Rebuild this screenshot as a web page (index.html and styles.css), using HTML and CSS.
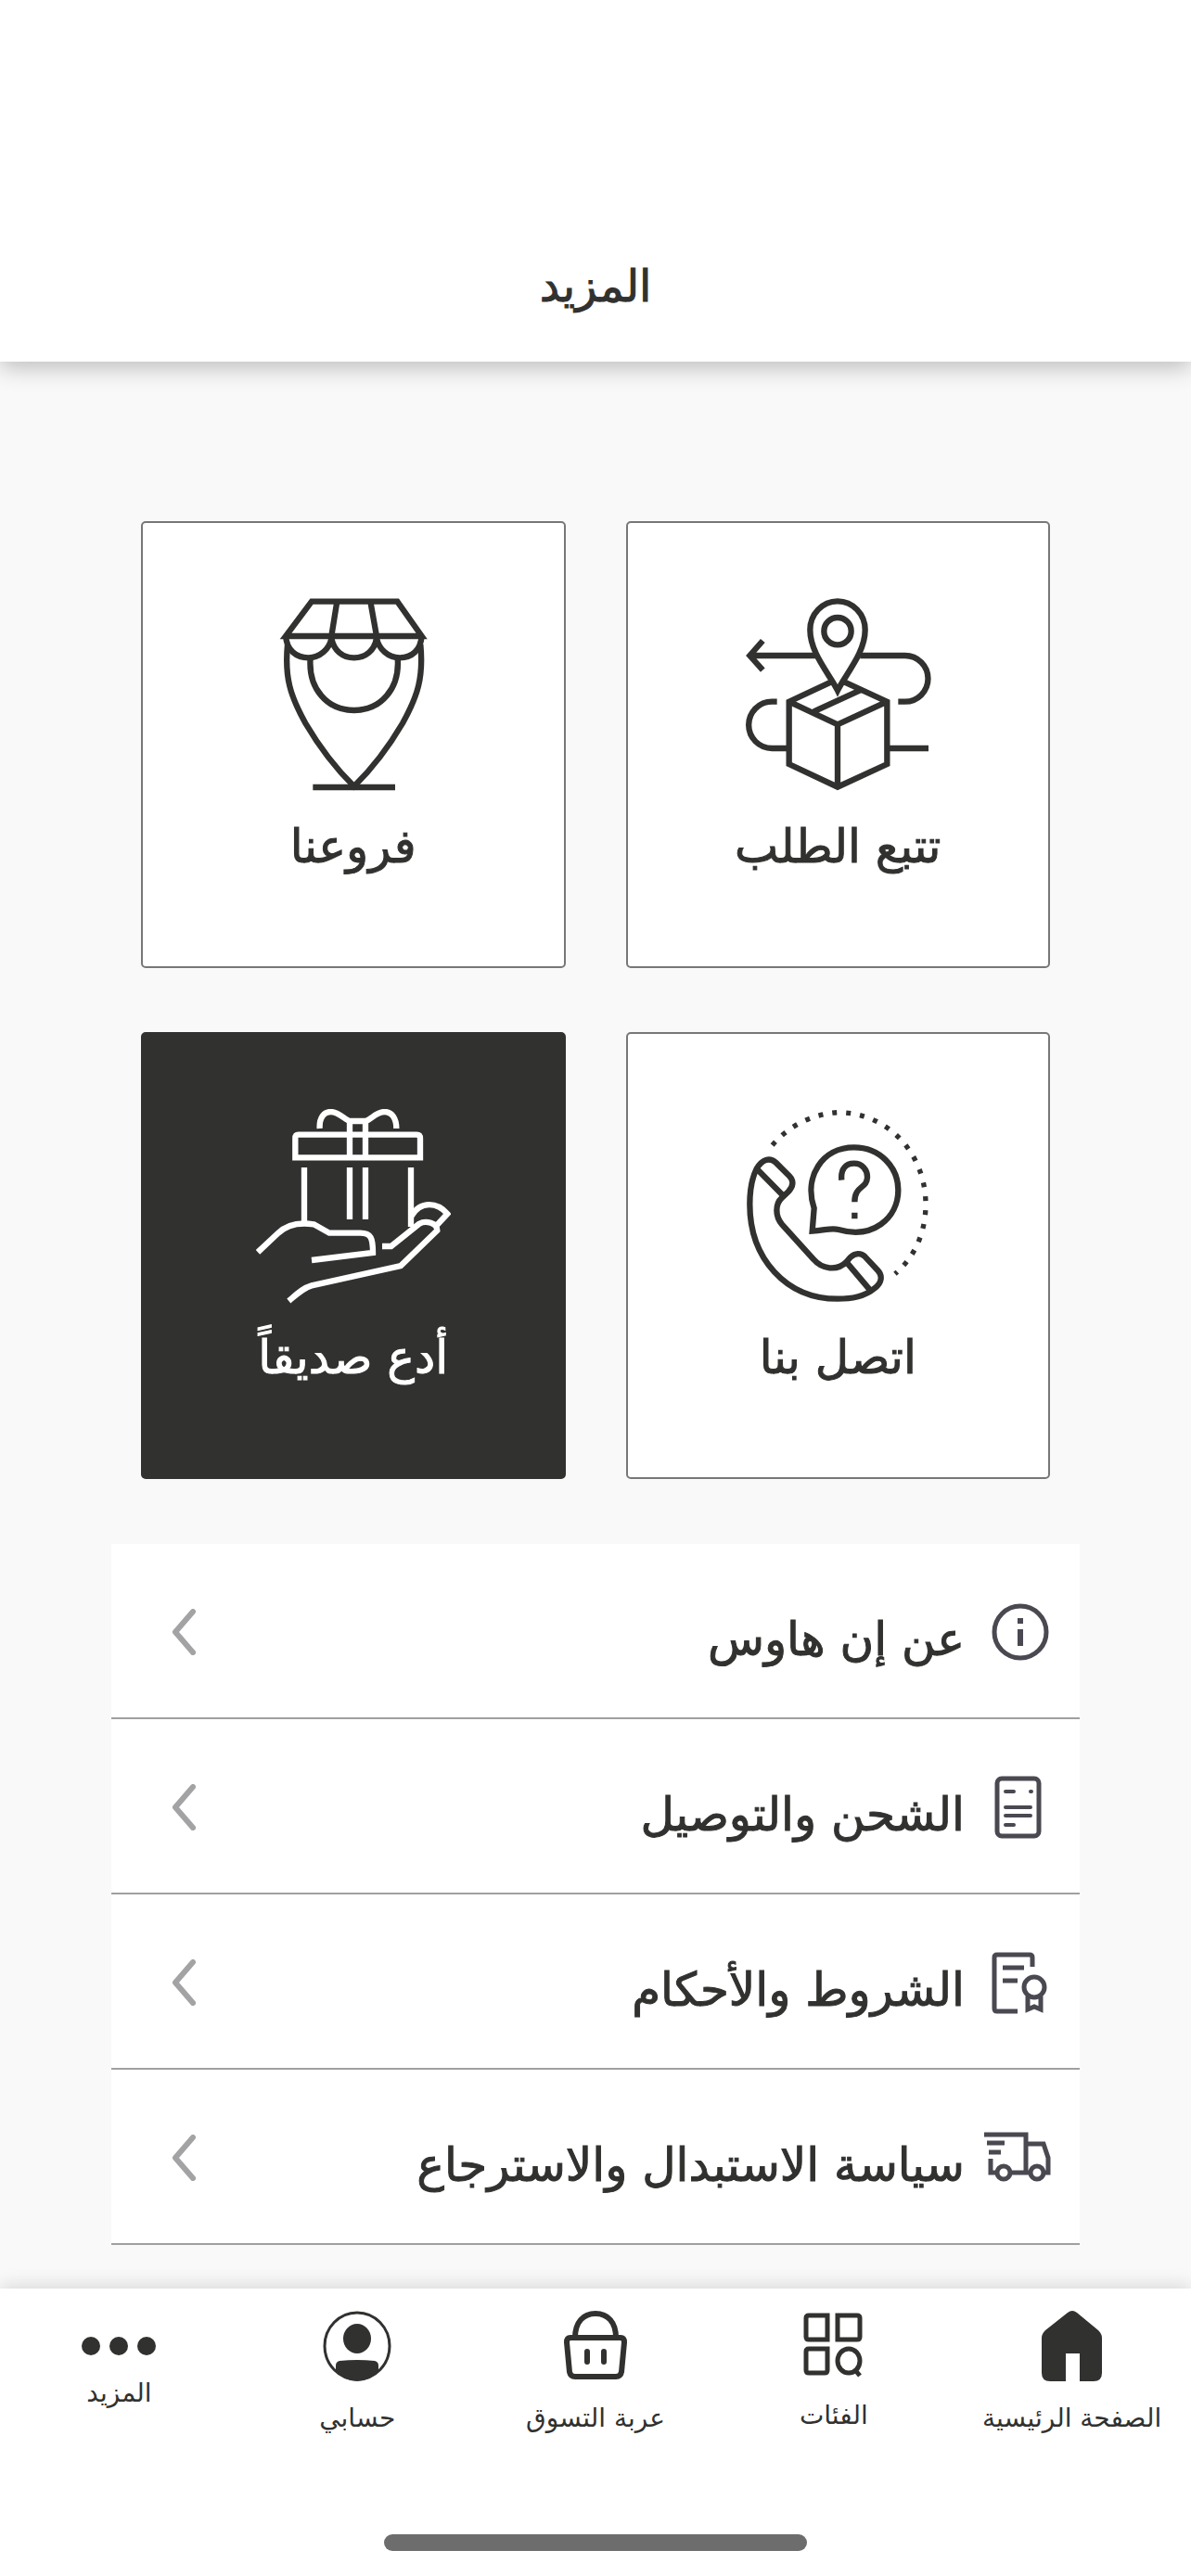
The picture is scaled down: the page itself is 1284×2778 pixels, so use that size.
FILE: index.html
```html
<!DOCTYPE html>
<html lang="ar" dir="rtl">
<head>
    <meta charset="UTF-8">
    <meta name="viewport" content="width=device-width, initial-scale=1.0">
    <title>المزيد</title>
    <link rel="stylesheet" href="styles.css">
</head>
<body>
    <header class="header">
        <h1>المزيد</h1>
    </header>

    <main class="content">
        <!-- البطاقات -->
        <div class="cards">
            <a href="#" class="card">
                <svg class="card-icon" viewBox="87 75 630 630">
                    <path d="M330 261H116M160 213L118 261L160 308M475 261H620A74 74 0 0 1 620 410H598M206 410H190A74 74 0 0 0 190 561H240M565 561H696"/>
                    <path d="M380 347L245 410V612L402 686L562 612V410L425 347M245 410L402 484L562 410M402 484V686M325 442L475 373"/>
                    <path d="M402 374C375 320 313 252 313 178A89 93 0 0 1 491 178C491 252 429 320 402 374Z"/>
                    <circle cx="402" cy="182" r="44"/>
                </svg>
                <span>تتبع الطلب</span>
            </a>
            <a href="#" class="card">
                <svg class="card-icon" viewBox="-12 75 630 630">
                    <path d="M168 86H445L524 198H84ZM250 86L232 198V225M358 86L378 198V225"/>
                    <path d="M84 198C88 244 118 268 157 268C195 268 225 240 232 205C240 245 268 268 305 268C342 268 371 245 378 205C386 240 414 268 453 268C492 268 520 244 524 198"/>
                    <path d="M90 225C80 330 98 390 148 480C195 560 245 625 305 684C365 625 415 560 462 480C512 390 530 330 520 225"/>
                    <path d="M164 268C156 370 220 438 305 438C390 438 454 370 446 268M172 687H438"/>
                </svg>
                <span>فروعنا</span>
            </a>
            <a href="#" class="card">
                <svg class="card-icon" viewBox="87 77 630 630">
                    <path class="dots" d="M191 194A300 300 0 0 1 402 88C568 88 687 224 687 385C687 479 650 557 588 610"/>
                    <path d="M140 270C158 240 182 232 202 250L246 294C262 310 258 328 243 344L222 364C199 385 200 424 222 450L325 564C351 595 401 602 430 572L443 557C458 543 477 541 491 555L532 599C548 616 545 638 524 655C488 686 445 691 402 691C235 691 118 560 118 385C118 335 124 302 140 270Z"/>
                    <path d="M140 270L227 358M432 574L508 664"/>
                    <path d="M320 472L326 398C292 296 352 201 455 201C540 201 598 266 598 339C598 431 515 499 405 467C382 460 360 470 320 472Z"/>
                    <path d="M415 307C411 269 430 253 455 253C482 253 498 274 498 296C498 337 457 322 457 378M457 412V432"/>
                </svg>
                <span>اتصل بنا</span>
            </a>
            <a href="#" class="card card-dark">
                <svg class="card-icon" viewBox="78 77 630 630">
                    <path d="M284 140C282 105 298 86 320 86C348 86 368 116 384 116H432C452 110 466 86 494 86C518 86 532 108 532 140"/>
                    <path d="M215 160H598Q609 160 609 172V234H205V172Q205 160 215 160ZM381 116V234M432 116V234M381 266V434M432 266V434M234 266V450M579 266V458"/>
                    <path d="M84 540L148 480C182 446 225 444 265 450L315 478H415C450 478 456 495 456 542L258 566"/>
                    <path d="M184 698C210 676 230 656 258 648L546 584L664 470C664 446 628 436 606 448L515 521H486M580 424C610 372 665 378 697 416L662 454"/>
                </svg>
                <span>أدع صديقاً</span>
            </a>
        </div>

        <!-- قائمة الصفحات -->
        <ul class="menu">
            <li>
                <a href="#">
                    <svg class="menu-icon" viewBox="0 0 72 72">
                        <circle cx="39" cy="36" r="28"/>
                        <path d="M39 21V27M39 33V51" stroke-width="6"/>
                    </svg>
                    <span>عن إن هاوس</span>
                    <svg class="arrow" viewBox="0 0 26 50"><path d="M23 3L4 25L23 47"/></svg>
                </a>
            </li>
            <li>
                <a href="#">
                    <svg class="menu-icon" viewBox="0 0 72 72">
                        <rect x="14" y="5" width="45" height="62" rx="5"/>
                        <path class="round" d="M23 19H32M50 19H51M23 36H50M23 45H50M23 55H32"/>
                    </svg>
                    <span>الشحن والتوصيل</span>
                    <svg class="arrow" viewBox="0 0 26 50"><path d="M23 3L4 25L23 47"/></svg>
                </a>
            </li>
            <li>
                <a href="#">
                    <svg class="menu-icon" viewBox="0 0 72 72">
                        <path d="M36 67H14Q11 67 11 64V9Q11 6 14 6H49Q52 6 52 9V19M20 20H43M20 34H36"/>
                        <circle cx="54" cy="41" r="11"/>
                        <path d="M47 51V65L54 62L61 65V51"/>
                    </svg>
                    <span>الشروط والأحكام</span>
                    <svg class="arrow" viewBox="0 0 26 50"><path d="M23 3L4 25L23 47"/></svg>
                </a>
            </li>
            <li>
                <a href="#">
                    <svg class="menu-icon" viewBox="0 0 72 72">
                        <path d="M0 11H45V53M3 20H22M5 30H18M7 37V52H14M28 52H49M64 52H69V36L64 21H45"/>
                        <circle cx="21" cy="52" r="7"/>
                        <circle cx="57" cy="52" r="7"/>
                    </svg>
                    <span>سياسة الاستبدال والاسترجاع</span>
                    <svg class="arrow" viewBox="0 0 26 50"><path d="M23 3L4 25L23 47"/></svg>
                </a>
            </li>
        </ul>
    </main>

    <!-- شريط التنقل السفلي -->
    <footer class="bottom-bar">
        <nav class="tabs">
            <a href="#" class="tab">
                <svg class="tab-icon" viewBox="0 0 76 76">
                    <path d="M33 2Q38-2 43 2L66 21Q70 25 70 29V67Q70 76 61 76H46V46H31V76H14Q5 76 5 67V29Q5 25 9 21Z"/>
                </svg>
                <span>الصفحة الرئيسية</span>
            </a>
            <a href="#" class="tab tab-categories">
                <svg class="tab-icon line" viewBox="1 1 76 76">
                    <path d="M12 6H32V32H12Q9 32 9 29V9Q9 6 12 6ZM43 6H64Q67 6 67 9V29Q67 32 64 32H43ZM12 42H32V65Q32 68 29 68H12Q9 68 9 65V45Q9 42 12 42ZM62 65L67 71"/>
                    <ellipse cx="55" cy="55" rx="12" ry="13"/>
                </svg>
                <span>الفئات</span>
            </a>
            <a href="#" class="tab">
                <svg class="tab-icon basket" viewBox="0 0 76 76">
                    <path d="M16 29C16 12 25 3 38 3S60 12 60 29"/>
                    <path d="M11 29H65Q69 29 69 34L66 66Q65 71 60 71H16Q11 71 10 66L7 34Q7 29 11 29ZM29 44V55M47 44V55"/>
                </svg>
                <span>عربة التسوق</span>
            </a>
            <a href="#" class="tab">
                <svg class="tab-icon" viewBox="0 0 76 76">
                    <ellipse cx="38" cy="38" rx="35" ry="36" fill="none" stroke="#31312f" stroke-width="3"/>
                    <ellipse cx="38" cy="30" rx="15" ry="16"/>
                    <path d="M15 59Q15 55 19 54Q38 52 57 54Q61 55 61 59V65Q51 76 38 76T15 65Z"/>
                </svg>
                <span>حسابي</span>
            </a>
            <a href="#" class="tab tab-more">
                <svg class="tab-icon" viewBox="0 0 80 60">
                    <circle cx="10" cy="38" r="10"/>
                    <circle cx="40" cy="38" r="10"/>
                    <circle cx="70" cy="38" r="10"/>
                </svg>
                <span>المزيد</span>
            </a>
        </nav>
        <div class="home-indicator"></div>
    </footer>
</body>
</html>
```
FILE: styles.css
```css
/* الأنماط العامة */
:root {
    --dark: #31312f;
    --icon-color: #4a4850;
    --arrow-color: #a3a2a4;
    --bg-color: #f9f9f9;
}

* {
    box-sizing: border-box;
    margin: 0;
    padding: 0;
}

body {
    min-height: 100vh;
    display: flex;
    flex-direction: column;
    background: var(--bg-color);
    color: var(--dark);
    font-family: 'DejaVu Sans', sans-serif;
}

a {
    color: inherit;
    text-decoration: none;
}

/* الترويسة */
.header {
    background: white;
    padding: 268px 20px 42px;
    text-align: center;
    box-shadow: 0 6px 24px rgba(0,0,0,0.25);
}

.header h1 {
    font-size: 48px;
    line-height: 80px;
    font-weight: normal;
}

.header h1,
.card span,
.menu span {
    -webkit-text-stroke: 1px currentColor;
}

.content {
    flex: 1;
    padding: 172px 120px 46px;
}

/* البطاقات */
.cards {
    display: grid;
    grid-template-columns: 1fr 1fr;
    gap: 69px 65px;
    padding: 0 32px;
    margin-bottom: 70px;
}

.card {
    display: flex;
    flex-direction: column;
    align-items: center;
    padding: 81px 10px 89px;
    background: white;
    border: 2px solid #777;
    border-radius: 5px;
    font-size: 50px;
    line-height: 80px;
}

.card-dark {
    background: var(--dark);
    border-color: var(--dark);
    color: white;
}

.card-icon {
    width: 210px;
    height: 210px;
    margin-bottom: 18px;
    fill: none;
    stroke: currentColor;
    stroke-width: 19;
}

.card-icon .dots {
    stroke-width: 16;
    stroke-dasharray: 15 30;
}

/* القائمة */
.menu {
    list-style: none;
    background: white;
}

.menu li {
    border-bottom: 2px solid #a0a0a0;
}

.menu a {
    display: flex;
    align-items: center;
    height: 187px;
    padding: 2px 31px 0 65px;
    font-size: 50px;
}

.menu span {
    padding-top: 16px;
}

.menu-icon {
    width: 72px;
    height: 72px;
    margin-left: 21px;
    fill: none;
    stroke: var(--icon-color);
    stroke-width: 5;
}

.menu-icon .round {
    stroke-width: 4;
    stroke-linecap: round;
}

.arrow {
    width: 26px;
    height: 50px;
    margin-right: auto;
    fill: none;
    stroke: var(--arrow-color);
    stroke-width: 6;
    stroke-linecap: round;
    stroke-linejoin: round;
}

/* شريط التنقل */
.bottom-bar {
    position: sticky;
    bottom: 0;
    background: white;
    padding: 24px 0 27px;
    box-shadow: 0 -2px 20px rgba(0,0,0,0.15);
}

.tabs {
    display: grid;
    grid-template-columns: repeat(5, 1fr);
    height: 241px;
}

.tab {
    display: flex;
    flex-direction: column;
    align-items: center;
    gap: 16px;
    font-size: 28px;
    line-height: 48px;
    white-space: nowrap;
}

.tab-categories {
    gap: 13px;
}

.tab-more {
    gap: 5px;
}

.tab-icon {
    height: 76px;
    fill: var(--dark);
}

.tab-more .tab-icon {
    height: 60px;
}

.tab-icon.line,
.tab-icon.basket {
    fill: none;
    stroke: var(--dark);
    stroke-width: 5;
}

.tab-icon.basket {
    stroke-width: 6;
    stroke-linecap: round;
}

.home-indicator {
    width: 456px;
    max-width: 60%;
    height: 18px;
    margin: 0 auto;
    border-radius: 9px;
    background: #6d6d6d;
}
```
